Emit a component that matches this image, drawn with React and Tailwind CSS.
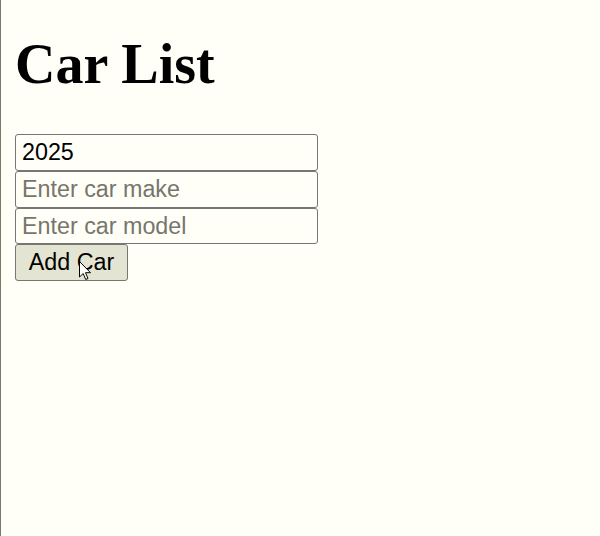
import React from "react";

export default function App() {
  return (
    <div className="relative min-h-[536px] w-[600px] bg-[#fffff7] border-l border-[#7a7a6c] pl-[14px] font-['Liberation_Sans',Arial,sans-serif] text-black">
      <h1 className="m-0 pt-[33px] pb-[39px] font-['Liberation_Serif','Times_New_Roman',serif] font-bold text-[56px] leading-[62px]">
        Car List
      </h1>
      <div className="flex flex-col w-[303px]">
        <input
          defaultValue="2025"
          className="h-[37px] w-full border border-[#767676] rounded-[3px] bg-[#fffff7] px-[6px] text-[23.3px] text-black outline-none"
        />
        <input
          placeholder="Enter car make"
          className="h-[37px] w-full border border-[#767676] rounded-[3px] bg-[#fffff7] px-[6px] text-[23.3px] text-black placeholder:text-[#76766c] outline-none"
        />
        <input
          placeholder="Enter car model"
          className="h-[36px] w-full border border-[#767676] rounded-[3px] bg-[#fffff7] px-[6px] text-[23.3px] text-black placeholder:text-[#76766c] outline-none"
        />
      </div>
      <button className="h-[37px] w-[113px] border border-[#767676] rounded-[3px] bg-[#e4e4d2] text-[23.3px] leading-none text-black text-center">
        Add Car
      </button>
      <svg
        className="absolute left-[78px] top-[261px]"
        width="13"
        height="20"
        viewBox="0 0 13 20"
      >
        <path
          d="M0.5 0.5 L0.5 16 L4.2 12.5 L6.7 18.5 L9 17.5 L6.5 11.7 L11.5 11.7 Z"
          fill="#ffffff"
          stroke="#000000"
          strokeWidth="1"
          strokeLinejoin="miter"
        />
      </svg>
    </div>
  );
}
